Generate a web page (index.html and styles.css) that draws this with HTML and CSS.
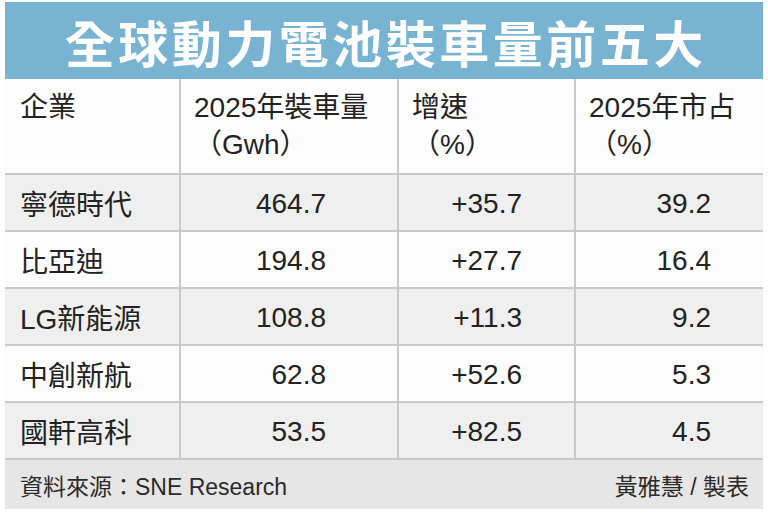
FILE: index.html
```html
<!DOCTYPE html>
<html lang="zh-Hant">
<head>
<meta charset="utf-8">
<title>全球動力電池裝車量前五大</title>
<link rel="stylesheet" href="styles.css">
</head>
<body>
<div class="card">
  <h1 class="title">全球動力電池裝車量前五大</h1>
  <div class="table">
    <div class="row head">
      <div class="cell">企業</div>
      <div class="cell">2025年裝車量<br>（Gwh）</div>
      <div class="cell">增速<br>（%）</div>
      <div class="cell">2025年市占<br>（%）</div>
    </div>
    <div class="row alt">
      <div class="cell name">寧德時代</div>
      <div class="cell num c2">464.7</div>
      <div class="cell num c3">+35.7</div>
      <div class="cell num c4">39.2</div>
    </div>
    <div class="row">
      <div class="cell name">比亞迪</div>
      <div class="cell num c2">194.8</div>
      <div class="cell num c3">+27.7</div>
      <div class="cell num c4">16.4</div>
    </div>
    <div class="row alt">
      <div class="cell name">LG新能源</div>
      <div class="cell num c2">108.8</div>
      <div class="cell num c3">+11.3</div>
      <div class="cell num c4">9.2</div>
    </div>
    <div class="row">
      <div class="cell name">中創新航</div>
      <div class="cell num c2">62.8</div>
      <div class="cell num c3">+52.6</div>
      <div class="cell num c4">5.3</div>
    </div>
    <div class="row alt">
      <div class="cell name">國軒高科</div>
      <div class="cell num c2">53.5</div>
      <div class="cell num c3">+82.5</div>
      <div class="cell num c4">4.5</div>
    </div>
  </div>
  <div class="foot">
    <span>資料來源：SNE Research</span>
    <span>黃雅慧 / 製表</span>
  </div>
</div>
</body>
</html>
```

FILE: styles.css
```css
html, body {
  margin: 0;
  padding: 0;
  background: #ffffff;
}

body {
  padding: 2px 5px 6px 5px;
  font-family: "Liberation Sans", "Noto Sans CJK TC", sans-serif;
  color: #222222;
}

.card {
  width: 758px;
  display: flex;
  flex-direction: column;
}

.title {
  margin: 0;
  height: 77px;
  display: flex;
  align-items: center;
  justify-content: center;
  background: #78b4d1;
  color: #ffffff;
  font-family: "Noto Sans CJK TC", sans-serif;
  font-weight: 700;
  font-size: 50px;
  letter-spacing: 3.5px;
  padding-left: 3.5px;
  box-sizing: border-box;
}

.table {
  display: flex;
  flex-direction: column;
  gap: 2px;
  background: #c9c9c9;
  border-bottom: 2px solid #c9c9c9;
}

.row {
  display: grid;
  grid-template-columns: 174px 216px 175px 187px;
  column-gap: 2px;
  height: 55px;
}

.row .cell {
  background: #fdfdfd;
  font-size: 28px;
  box-sizing: border-box;
}

.row.alt .cell {
  background: #efefef;
}

.row.head {
  height: 94px;
}

.row.head .cell {
  padding: 10px 0 0 13px;
  line-height: 37px;
}

.row.head .cell:first-child {
  padding-left: 15px;
}

.cell.name {
  display: flex;
  align-items: center;
  padding-left: 15px;
}

.cell.num {
  display: flex;
  align-items: center;
  justify-content: flex-end;
  padding-top: 2px;
}

.cell.c2 {
  padding-right: 71px;
}

.cell.c3,
.cell.c4 {
  padding-right: 52px;
}

.foot {
  height: 49px;
  display: flex;
  align-items: center;
  justify-content: space-between;
  padding: 0 14px 0 15px;
  background: #e6e6e7;
  font-size: 23px;
  color: #2a2a2a;
}
```
